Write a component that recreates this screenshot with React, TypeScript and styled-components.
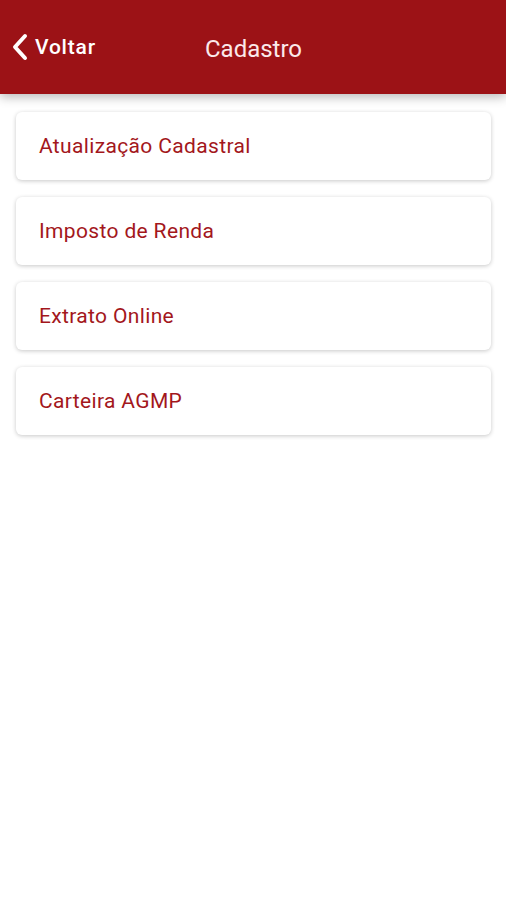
import * as React from 'react';
import styled, { createGlobalStyle } from 'styled-components';

const GlobalStyle = createGlobalStyle`
  html, body {
    margin: 0;
    padding: 0;
    background: #ffffff;
    font-family: Roboto, 'Liberation Sans', sans-serif;
  }
`;

const DivPage = styled.div`
  width: 506px;
  min-height: 900px;
  background: #ffffff;
`;

const DivHeader = styled.div`
  position: relative;
  height: 94px;
  background-color: #9c1216;
  display: flex;
  flex-direction: row;
  align-items: center;
  box-shadow: 0 3px 10px rgba(0, 0, 0, 0.28);
  color: #ffffff;
`;

const DivBack = styled.div`
  display: flex;
  flex-direction: row;
  align-items: center;
  gap: 6px;
  padding-left: 11px;
  font-size: 21px;
  font-weight: 500;
  letter-spacing: 0.8px;
  cursor: pointer;
  z-index: 1;
`;

const DivTitle = styled.div`
  position: absolute;
  left: 0;
  right: 0;
  top: 0;
  bottom: 0;
  display: flex;
  align-items: center;
  justify-content: center;
  padding-left: 1px;
  padding-top: 3px;
  font-size: 24px;
  color: #fbe9ea;
`;

const DivList = styled.div`
  display: flex;
  flex-direction: column;
  gap: 17px;
  padding: 18px 15px 0 16px;
`;

const DivCard = styled.div`
  height: 68px;
  border-radius: 6px;
  background-color: #ffffff;
  box-shadow: 0 1px 4px rgba(0, 0, 0, 0.22);
  display: flex;
  align-items: center;
  padding-left: 23px;
  font-size: 21px;
  letter-spacing: 0.35px;
  color: #a3171c;
  cursor: pointer;
`;

const items = ['Atualização Cadastral', 'Imposto de Renda', 'Extrato Online', 'Carteira AGMP'];

export default function App() {
  return (
    <>
      <GlobalStyle />
      <DivPage>
        <DivHeader>
          <DivBack>
            <svg width="18" height="28" viewBox="0 0 18 28">
              <path d="M14 3 L4 14 L14 25" fill="none" stroke="#ffffff" strokeWidth="4" strokeLinecap="round" strokeLinejoin="round" />
            </svg>
            <span>Voltar</span>
          </DivBack>
          <DivTitle>Cadastro</DivTitle>
        </DivHeader>
        <DivList>
          {items.map(i => <DivCard key={i}>{i}</DivCard>)}
        </DivList>
      </DivPage>
    </>
  );
}
